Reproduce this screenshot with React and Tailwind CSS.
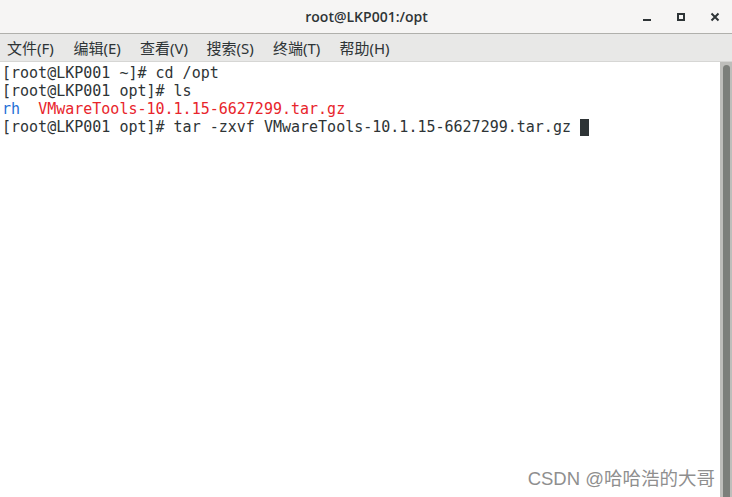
const lines = [
  [{ t: "[root@LKP001 ~]# cd /opt" }],
  [{ t: "[root@LKP001 opt]# ls" }],
  [
    { t: "rh", c: "text-[#1f6fd6]" },
    { t: "  " },
    { t: "VMwareTools-10.1.15-6627299.tar.gz", c: "text-[#e8252c]" },
  ],
  [{ t: "[root@LKP001 opt]# tar -zxvf VMwareTools-10.1.15-6627299.tar.gz " }],
];

const menus = ["文件(F)", "编辑(E)", "查看(V)", "搜索(S)", "终端(T)", "帮助(H)"];

const App = () => {
  return (
    <div className="w-[732px] h-[497px] flex flex-col bg-white overflow-hidden relative">
      {/* title bar */}
      <div className="h-[34px] shrink-0 flex items-center bg-[#f6f5f4] border-b border-[#b0b0ac] relative">
        <div className="flex-1 text-center text-[14px] font-semibold text-[#2e3436] font-['Open_Sans',sans-serif] pl-[1px]">
          root@LKP001:/opt
        </div>
        <div className="absolute right-0 top-0 h-[33px] flex items-center">
          <div className="w-[34px] flex justify-center">
            <div className="w-[8px] h-[2px] bg-[#2e3436] mt-[7px]" />
          </div>
          <div className="w-[34px] flex justify-center">
            <div className="w-[8px] h-[8px] border-2 border-[#2e3436]" />
          </div>
          <div className="w-[34px] flex justify-center">
            <svg width="10" height="10" viewBox="0 0 10 10">
              <path d="M1.5 1.5 L8.5 8.5 M8.5 1.5 L1.5 8.5" stroke="#2e3436" strokeWidth="2" />
            </svg>
          </div>
        </div>
      </div>

      {/* menu bar */}
      <div className="h-[28px] shrink-0 flex items-center bg-[#e8e8e7] border-b border-[#d6d6d4] pl-[7px] pt-[1px] text-[15px] text-[#2e3436] font-['Noto_Sans','Noto_Sans_CJK_SC',sans-serif]">
        {menus.map((m) => (
          <span key={m} className="w-[66.5px] whitespace-nowrap">{m}</span>
        ))}
      </div>

      {/* terminal */}
      <div className="flex-1 flex min-h-0">
        <div className="flex-1 pl-[2px] pt-[2px] font-['DejaVu_Sans_Mono',monospace] text-[15px] leading-[18px] text-[#2e3436] whitespace-pre">
          {lines.map((ln, i) => (
            <div key={i} className="flex items-center h-[18px]">
              {ln.map((s, j) => (
                <span key={j} className={s.c}>{s.t}</span>
              ))}
              {i === lines.length - 1 && (
                <span className="inline-block w-[9px] h-[17px] bg-[#2e3436]" />
              )}
            </div>
          ))}
        </div>
        <div className="w-[12px] shrink-0 bg-[#bebebb] pl-[3px] pr-[2px] pt-[3px]">
          <div className="h-full rounded-t-full bg-[#7c7f7b]" />
        </div>
      </div>

      <div className="absolute right-[17px] bottom-[4px] text-[18.5px] text-[#8f8f8f] font-['Liberation_Sans','Noto_Sans_CJK_SC',sans-serif]">
        CSDN @哈哈浩的大哥
      </div>
    </div>
  );
};

export default App;
